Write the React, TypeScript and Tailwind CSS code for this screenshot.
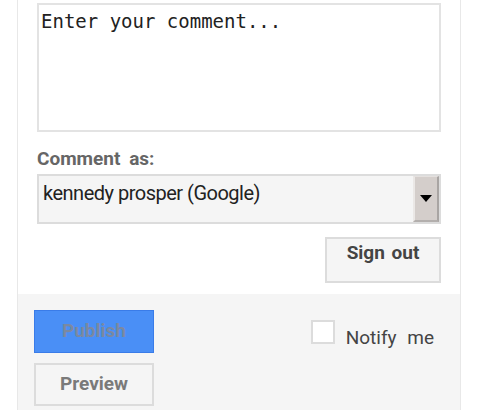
import { useState } from "react";

function App() {
    const [comment, setComment] = useState("");
    const [notify, setNotify] = useState(false);

    return (
        <div className="w-[480px] h-[410px] overflow-hidden bg-white font-['Roboto',sans-serif]">
            <div className="ml-[17px] w-[444px] h-full flex flex-col border-x border-[#e8e8e8]">
                {/* Comment form */}
                <div className="flex flex-col pt-[3px] px-[19px] pb-[11px]">
                    <textarea
                        value={comment}
                        onChange={(e) => setComment(e.target.value)}
                        placeholder="Enter your comment..."
                        className="h-[129px] w-full resize-none border-2 border-[#e3e3e3] bg-white pl-[2px] pt-[5px] font-['DejaVu_Sans_Mono',monospace] text-[19px] leading-[22px] text-[#222] placeholder:text-[#222] outline-none"
                    />

                    <label className="mt-[16px] text-[19px] leading-[22px] font-bold text-[#666] [word-spacing:4px]">
                        Comment as:
                    </label>

                    <div className="mt-[4px] flex h-[50px] border-2 border-[#dcdcdc] bg-[#f5f5f5]">
                        <div className="flex-1 pl-[4px] pt-[5px] text-[20px] leading-[24px] tracking-[-0.5px] text-[#222]">
                            kennedy prosper (Google)
                        </div>
                        <div className="flex w-[26px] items-center justify-center border-l-2 border-t border-r-2 border-b-2 border-l-[#ebe8e6] border-t-[#e4e0de] border-r-[#a9a5a3] border-b-[#b3afad] bg-[#d4cecb]">
                            <svg width="12" height="7" viewBox="0 0 12 7">
                                <path d="M0 0h12L6 7z" fill="#000" />
                            </svg>
                        </div>
                    </div>

                    <div className="mt-[13px] flex justify-end">
                        <button className="h-[46px] w-[116px] border-2 border-[#dcdcdc] bg-[#f5f5f5] pb-[14px] text-[19px] font-bold text-[#444] [word-spacing:2px]">
                            Sign out
                        </button>
                    </div>
                </div>

                {/* Actions */}
                <div className="flex flex-1 justify-between bg-[#f5f5f5] pl-[16px] pr-[26px] pt-[16px]">
                    <div className="flex flex-col gap-[10px]">
                        <button className="h-[43px] w-[120px] border border-[#3a7ce8] bg-[#4a8ff6] text-[19px] font-bold text-[#7b89a1]">
                            Publish
                        </button>
                        <button className="h-[43px] w-[120px] border-2 border-[#dcdcdc] bg-[#f5f5f5] text-[19px] font-bold text-[#7a7a7a]">
                            Preview
                        </button>
                    </div>
                    <label className="mt-[10px] flex h-fit items-start gap-[11px]">
                        <input
                            type="checkbox"
                            checked={notify}
                            onChange={(e) => setNotify(e.target.checked)}
                            className="h-[24px] w-[24px] appearance-none border-2 border-[#dcdcdc] bg-white checked:bg-[#4a8ff6]"
                        />
                        <span className="mt-[7px] text-[19px] leading-[22px] text-[#444] [word-spacing:6px]">
                            Notify me
                        </span>
                    </label>
                </div>
            </div>
        </div>
    );
}

export default App;
